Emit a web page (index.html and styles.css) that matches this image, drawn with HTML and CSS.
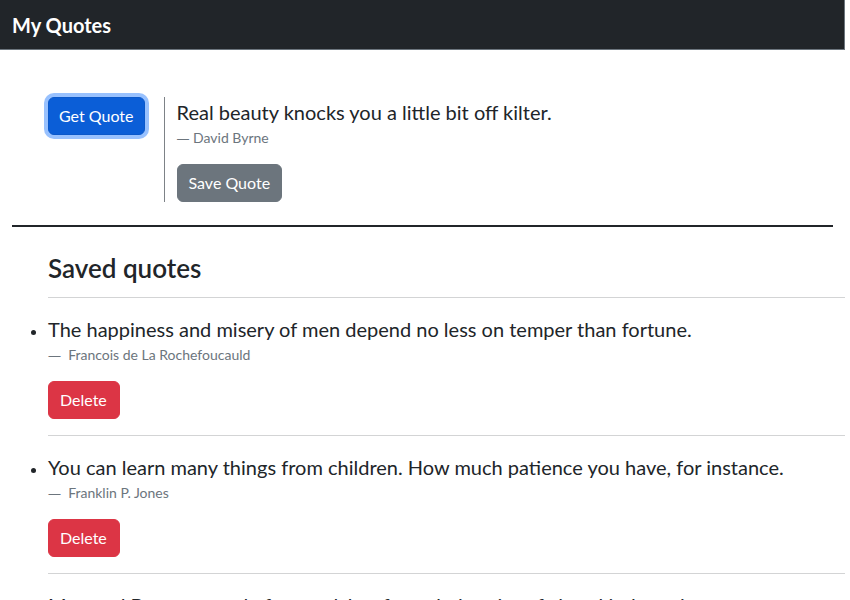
FILE: index.html
```html
<!DOCTYPE html>
<html lang="en">
<head>
<meta charset="utf-8">
<title>My Quotes</title>
<link rel="stylesheet" href="styles.css">
</head>
<body>
<div class="page">
  <nav class="navbar"><span class="brand">My Quotes</span></nav>
  <main class="main">
    <section class="random">
      <div class="random-action">
        <button class="btn btn-primary is-focused">Get Quote</button>
      </div>
      <div class="random-quote">
        <p class="quote-text">Real beauty knocks you a little bit off kilter.</p>
        <p class="quote-author"><span class="dash">—</span> David Byrne</p>
        <button class="btn btn-secondary">Save Quote</button>
      </div>
    </section>
    <hr class="divider">
    <section class="saved">
      <h3 class="saved-title">Saved quotes</h3>
      <hr class="rule">
      <ul class="saved-list">
        <li class="saved-item">
          <p class="quote-text">The happiness and misery of men depend no less on temper than fortune.</p>
          <p class="quote-author small"><span class="dash">—</span>&nbsp; Francois de La Rochefoucauld</p>
          <button class="btn btn-danger">Delete</button>
          <hr class="rule">
        </li>
        <li class="saved-item">
          <p class="quote-text">You can learn many things from children. How much patience you have, for instance.</p>
          <p class="quote-author small"><span class="dash">—</span>&nbsp; Franklin P. Jones</p>
          <button class="btn btn-danger">Delete</button>
          <hr class="rule">
        </li>
        <li class="saved-item">
          <p class="quote-text">Men and Boys are made for good, but from their point of view, kindness is rare.</p>
          <p class="quote-author small"><span class="dash">—</span>&nbsp; Unknown</p>
          <button class="btn btn-danger">Delete</button>
          <hr class="rule">
        </li>
      </ul>
    </section>
  </main>
</div>
</body>
</html>
```

FILE: styles.css
```css
* { box-sizing: border-box; }
html, body { margin: 0; padding: 0; background: #fff; }
body {
  font-family: Lato, "Open Sans", sans-serif;
  color: #212529;
  font-size: 16px;
  line-height: 1.5;
}
.page { width: 845px; }
.navbar {
  height: 50px;
  background: #212529;
  border-bottom: 1px solid #6c757d;
  border-right: 1px solid #6c757d;
  display: flex;
  align-items: center;
  padding: 0 12px;
}
.brand { color: #fff; font-weight: 700; font-size: 20px; line-height: 30px; }
.main { padding: 0 12px; }
.random {
  display: flex;
  padding: 47px 0 0 36px;
}
.random-action { padding-right: 19px; border-right: 1px solid #7d8287; }
.random-quote { padding-left: 12px; }
.quote-text { margin: 0; font-size: 20px; line-height: 30px; }
.quote-author { margin: 0 0 16px; font-size: 14px; line-height: 21px; height: 21px; color: #6c757d; }
.dash { font-family: "Open Sans", sans-serif; font-size: 13px; line-height: 1; }
.btn {
  font-family: inherit;
  font-size: 16px;
  line-height: 24px;
  padding: 6px 11px;
  border: 1px solid transparent;
  border-radius: 6px;
  color: #fff;
  cursor: pointer;
  display: inline-block;
}
.btn-primary { background: #0b5ed7; border-color: #0a58ca; padding: 6px 10px; }
.is-focused { box-shadow: 0 0 0 4px rgba(49, 132, 253, 0.5); }
.btn-secondary { background: #6c757d; border-color: #6c757d; }
.btn-danger { background: #dc3545; border-color: #dc3545; padding: 6px 12px 6px 11px; }
.divider {
  margin: 23px 0 0;
  border: 0;
  border-top: 2px solid #212529;
}
.saved { padding-left: 36px; margin-right: -12px; }
.saved-title { margin: 26px 0 0; font-size: 26px; font-weight: 600; line-height: 31px; }
.rule {
  margin: 13px 0 16px;
  border: 0;
  border-top: 1px solid #d3d4d5;
}
.saved-list { margin: 0; padding: 0; list-style: disc outside; }
.saved-item .rule { margin: 16px 0; }
```
